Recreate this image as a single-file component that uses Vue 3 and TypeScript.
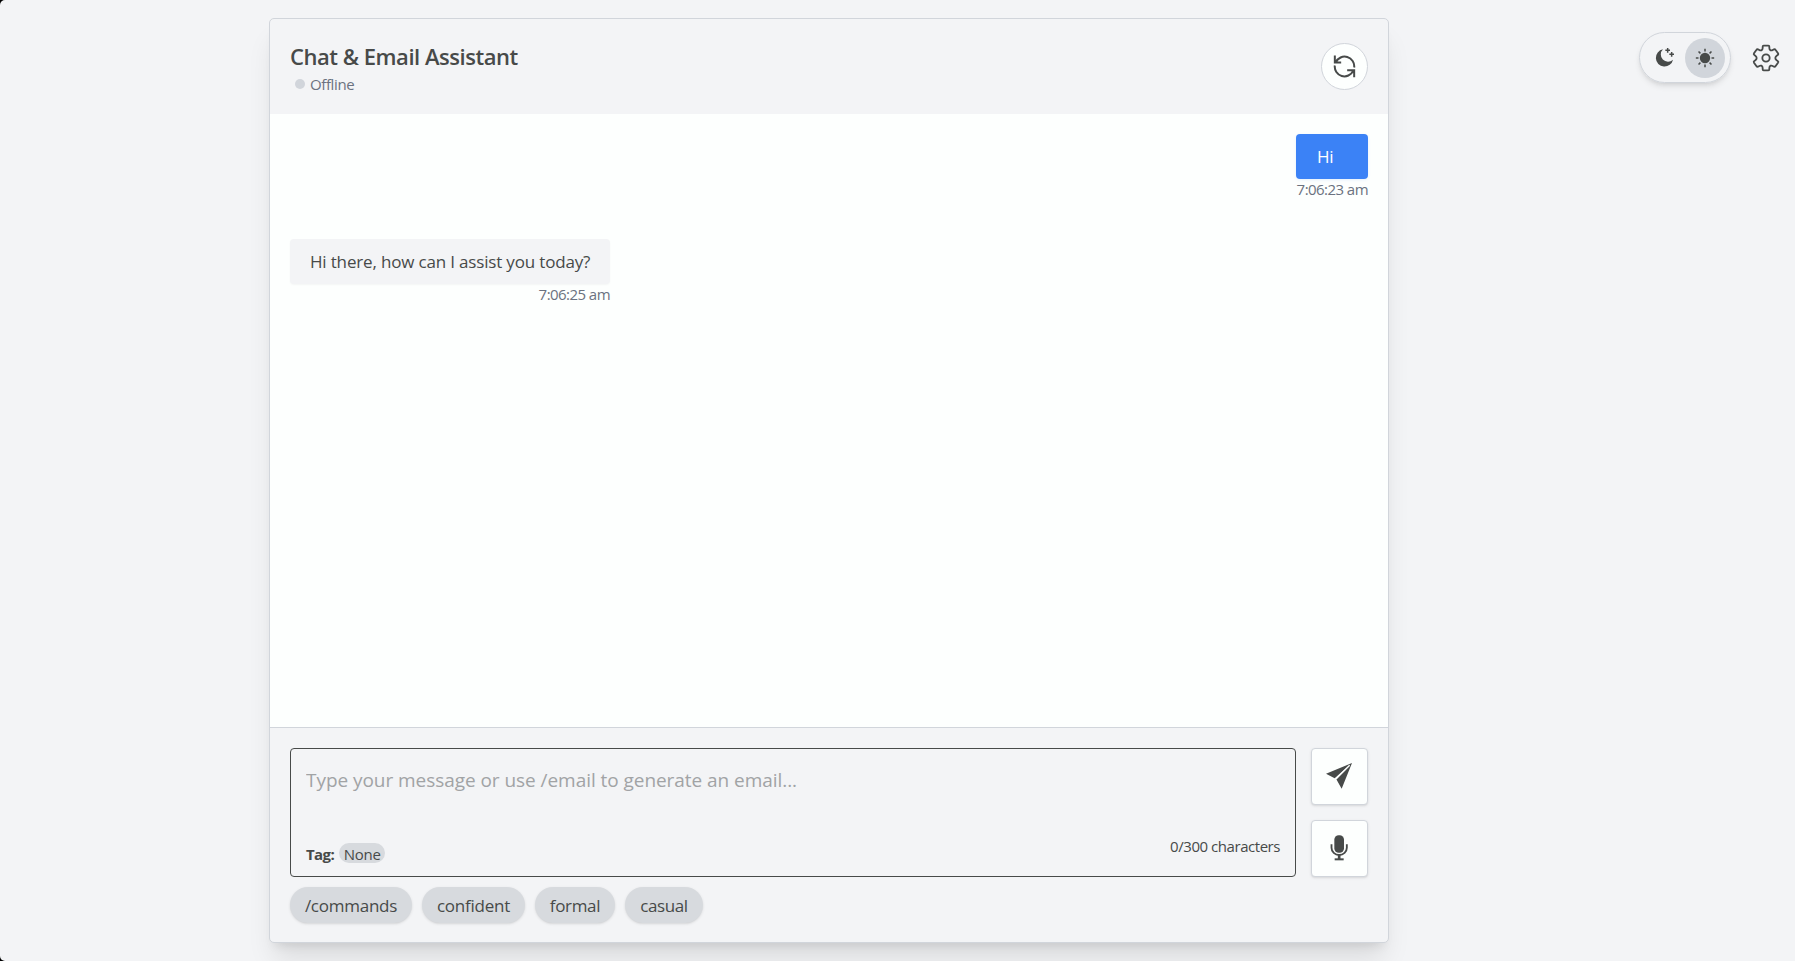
<script setup lang="ts">
import { ref } from 'vue'

interface Message {
  id: number
  from: 'user' | 'bot'
  text: string
  time: string
}

const limit = 300
const draft = ref('')
const messages: Message[] = [
  { id: 1, from: 'user', text: 'Hi', time: '7:06:23 am' },
  { id: 2, from: 'bot', text: 'Hi there, how can I assist you today?', time: '7:06:25 am' },
]
const chips = ['/commands', 'confident', 'formal', 'casual']
const rays = [0, 45, 90, 135, 180, 225, 270, 315]
</script>

<template>
  <div class="page">
    <main class="card">
      <header class="head">
        <div>
          <h1 class="title">Chat &amp; Email Assistant</h1>
          <div class="status"><span class="dot"></span><span>Offline</span></div>
        </div>
        <button class="refresh" aria-label="Restart">
          <svg width="23" height="23" viewBox="-34.5 -34.5 69 69" fill="none" stroke="currentColor" stroke-width="6">
            <path d="M-29 -33 V-12 H-10 M-26 -13 A29 29 0 0 1 29 3" />
            <path d="M29 32 V11 H8 M26 13 A29 29 0 0 1 -29 -3" />
          </svg>
        </button>
      </header>

      <section class="log">
        <div v-for="m in messages" :key="m.id" class="message" :class="m.from">
          <div class="bubble"><span>{{ m.text }}</span></div>
          <time class="time">{{ m.time }}</time>
        </div>
      </section>

      <footer class="composer">
        <div class="row">
          <div class="box">
            <textarea
              v-model="draft"
              class="input"
              :maxlength="limit"
              placeholder="Type your message or use /email to generate an email..."
            ></textarea>
            <div class="meta">
              <div class="tag"><b>Tag:</b><span class="pill">None</span></div>
              <span class="count">{{ draft.length }}/{{ limit }} characters</span>
            </div>
          </div>
          <div class="actions">
            <button class="action" aria-label="Send">
              <svg width="26" height="26" viewBox="559 146 78 78" fill="currentColor">
                <path d="M637 146 L559 178 L585 192 L627 154 L590 195 L606 223 Z" />
                <path d="M630 153 L589 194" stroke="#fdfffe" stroke-width="4" />
              </svg>
            </button>
            <button class="action" aria-label="Record">
              <svg width="26" height="26" viewBox="559 362 78 78" fill="none" stroke="currentColor">
                <rect x="584" y="363" width="29" height="52" rx="13" fill="currentColor" stroke="none" />
                <path d="M575.5 390 V400 A23 22 0 0 0 621.5 400 V390" stroke-width="5.5" />
                <path d="M598.5 422 V434" stroke-width="8" />
                <path d="M585 435 H612" stroke-width="6" />
              </svg>
            </button>
          </div>
        </div>
        <div class="chips">
          <button v-for="c in chips" :key="c" class="chip" :class="c.replace('/', '')"><span>{{ c }}</span></button>
        </div>
      </footer>
    </main>

    <aside class="tools">
      <div class="toggle">
        <span class="mode">
          <svg width="22" height="21" viewBox="74 66 66 63" fill="currentColor">
            <path d="M101 73 A26 26 0 1 0 131 104 A21 21 0 0 1 101 73 Z" />
            <path d="M115 69 V83 M108 76 H122 M127 81 V95 M120 88 H134" stroke="currentColor" stroke-width="4.5" />
          </svg>
        </span>
        <span class="mode on">
          <svg width="20" height="20" viewBox="-30 -30 60 60" fill="currentColor">
            <circle r="15.5" />
            <path v-for="a in rays" :key="a" d="M0 -19.5 V-27.5" :transform="`rotate(${a})`" stroke="currentColor" stroke-width="4.5" />
          </svg>
        </span>
      </div>
      <svg class="gear" width="30" height="30" viewBox="18 23 90 90" fill="none" stroke="currentColor" stroke-width="5.5" stroke-linejoin="round">
        <path d="M56 31 H70 Q73 31 73 34 V38 Q73 43 77 45 Q80 46 83 44 L87 42 Q90 41 92 44 L99 54 Q101 57 98 59 L95 61 Q91 64 91 68 Q91 72 95 75 L98 77 Q101 79 99 82 L92 92 Q90 95 87 94 L83 92 Q80 90 77 91 Q73 93 73 98 V102 Q73 105 70 105 H56 Q53 105 53 102 V98 Q53 93 49 91 Q46 90 43 92 L39 94 Q36 95 34 92 L27 82 Q25 79 28 77 L31 75 Q35 72 35 68 Q35 64 31 61 L28 59 Q25 57 27 54 L34 44 Q36 41 39 42 L43 44 Q46 46 49 45 Q53 43 53 38 V34 Q53 31 56 31 Z" />
        <circle cx="63" cy="68" r="11" />
      </svg>
    </aside>
  </div>
</template>

<style>
html {
  background: #000;
}
</style>

<style scoped>
* {
  box-sizing: border-box;
}
button {
  border: 0;
  padding: 0;
  font: inherit;
  color: inherit;
  cursor: pointer;
}
.page {
  position: relative;
  width: 100%;
  height: 961px;
  padding: 18px 406px 18px 269px;
  overflow: hidden;
  border-radius: 5px 0 0 5px;
  background: #f3f4f6;
  color: #474a49;
  font: 17px/24px "Open Sans", "Noto Sans", sans-serif;
}
.card {
  display: flex;
  flex-direction: column;
  height: 925px;
  border: 1px solid #d1d5db;
  border-radius: 5px;
  background: #f3f4f6;
  box-shadow: 0 20px 25px -5px rgba(0, 0, 0, 0.1), 0 8px 10px -6px rgba(0, 0, 0, 0.1);
}
.head {
  display: flex;
  justify-content: space-between;
  height: 95px;
  padding: 22px 20px 0;
}
.title {
  margin: 0;
  font-size: 22px;
  line-height: 30px;
  font-weight: 600;
  letter-spacing: -0.47px;
  white-space: nowrap;
}
.status {
  display: flex;
  align-items: center;
  gap: 5px;
  padding-left: 5px;
  margin-top: 2px;
  font-size: 15px;
  line-height: 22px;
  letter-spacing: -0.38px;
  color: #6b7280;
}
.dot {
  width: 10px;
  height: 10px;
  border-radius: 50%;
  background: #d1d5db;
}
.refresh {
  display: flex;
  align-items: center;
  justify-content: center;
  width: 47px;
  height: 47px;
  margin-top: 2px;
  border: 1px solid #d1d5db;
  border-radius: 50%;
  background: #fdfffe;
}
.log {
  flex: 1;
  display: flex;
  flex-direction: column;
  gap: 39px;
  padding: 20px;
  background: #fdfffe;
}
.message {
  display: flex;
  flex-direction: column;
  align-items: flex-end;
  height: 66px;
}
.message.user {
  align-self: flex-end;
}
.message.bot {
  align-self: flex-start;
}
.bubble {
  height: 45px;
  padding: 11px 20px 10px;
  border-radius: 4px;
  letter-spacing: -0.17px;
  white-space: nowrap;
}
.user .bubble {
  width: 72px;
  padding-left: 21px;
  background: #3b82f6;
  color: #fff;
  box-shadow: 0 1px 3px rgba(59, 130, 246, 0.12);
}
.bot .bubble {
  width: 320px;
  background: #f3f4f6;
  box-shadow: 0 1px 2px rgba(0, 0, 0, 0.04);
}
.time {
  margin-top: -1px;
  font-size: 15px;
  line-height: 22px;
  letter-spacing: -0.55px;
  color: #6b7280;
  white-space: nowrap;
}
.composer {
  height: 215px;
  padding: 20px;
  border-top: 1px solid #d1d5db;
}
.row {
  display: flex;
  gap: 15px;
}
.box {
  flex: 1;
  display: flex;
  flex-direction: column;
  height: 129px;
  padding: 15px 15px 12px;
  border: 1px solid #474a49;
  border-radius: 4px;
}
.input {
  display: block;
  flex: none;
  width: 100%;
  height: 72px;
  padding: 2px 0 0;
  border: 0;
  outline: 0;
  resize: none;
  background: transparent;
  color: inherit;
  font: 19px/28px "Open Sans", "Noto Sans", sans-serif;
  letter-spacing: -0.05px;
}
.input::placeholder {
  color: #a1a3a5;
  opacity: 1;
}
.meta {
  display: flex;
  justify-content: space-between;
  font-size: 15px;
  line-height: 20px;
}
.tag {
  display: flex;
  gap: 5px;
  padding-top: 7px;
}
.tag b {
  padding-top: 1px;
  letter-spacing: -0.6px;
}
.pill {
  width: 46px;
  height: 20px;
  border-radius: 10px;
  background: #d7dade;
  text-align: center;
  line-height: 22px;
  letter-spacing: -0.25px;
}
.count {
  letter-spacing: -0.45px;
}
.actions {
  display: flex;
  flex-direction: column;
  gap: 15px;
}
.action {
  display: flex;
  align-items: center;
  justify-content: center;
  width: 57px;
  height: 57px;
  padding: 0 1px 1px 0;
  border: 1px solid #d1d5db;
  border-radius: 4px;
  background: #fdfffe;
  box-shadow: 0 1px 3px rgba(0, 0, 0, 0.1), 0 1px 2px -1px rgba(0, 0, 0, 0.1);
}
.chips {
  display: flex;
  gap: 10px;
  margin-top: 10px;
}
.chip {
  height: 36px;
  padding-top: 1px;
  border-radius: 18px;
  background: #d7dade;
  white-space: nowrap;
  box-shadow: 0 1px 3px rgba(0, 0, 0, 0.1), 0 1px 2px -1px rgba(0, 0, 0, 0.1);
}
.commands {
  width: 122px;
  letter-spacing: -0.25px;
}
.confident {
  width: 103px;
  letter-spacing: -0.23px;
}
.formal {
  width: 80px;
  letter-spacing: -0.33px;
}
.casual {
  width: 78px;
  letter-spacing: -0.4px;
}
.tools {
  position: absolute;
  top: 32px;
  right: 14px;
  display: flex;
  align-items: center;
  gap: 20px;
}
.toggle {
  display: flex;
  align-items: center;
  width: 92px;
  height: 51px;
  padding: 5px;
  border: 1px solid #d1d5db;
  border-radius: 26px;
  box-shadow: 0 4px 6px -1px rgba(0, 0, 0, 0.1), 0 2px 4px -2px rgba(0, 0, 0, 0.1);
}
.mode {
  display: flex;
  align-items: center;
  justify-content: center;
  width: 40px;
  height: 40px;
  border-radius: 50%;
}
.on {
  background: #d1d5db;
}
</style>
